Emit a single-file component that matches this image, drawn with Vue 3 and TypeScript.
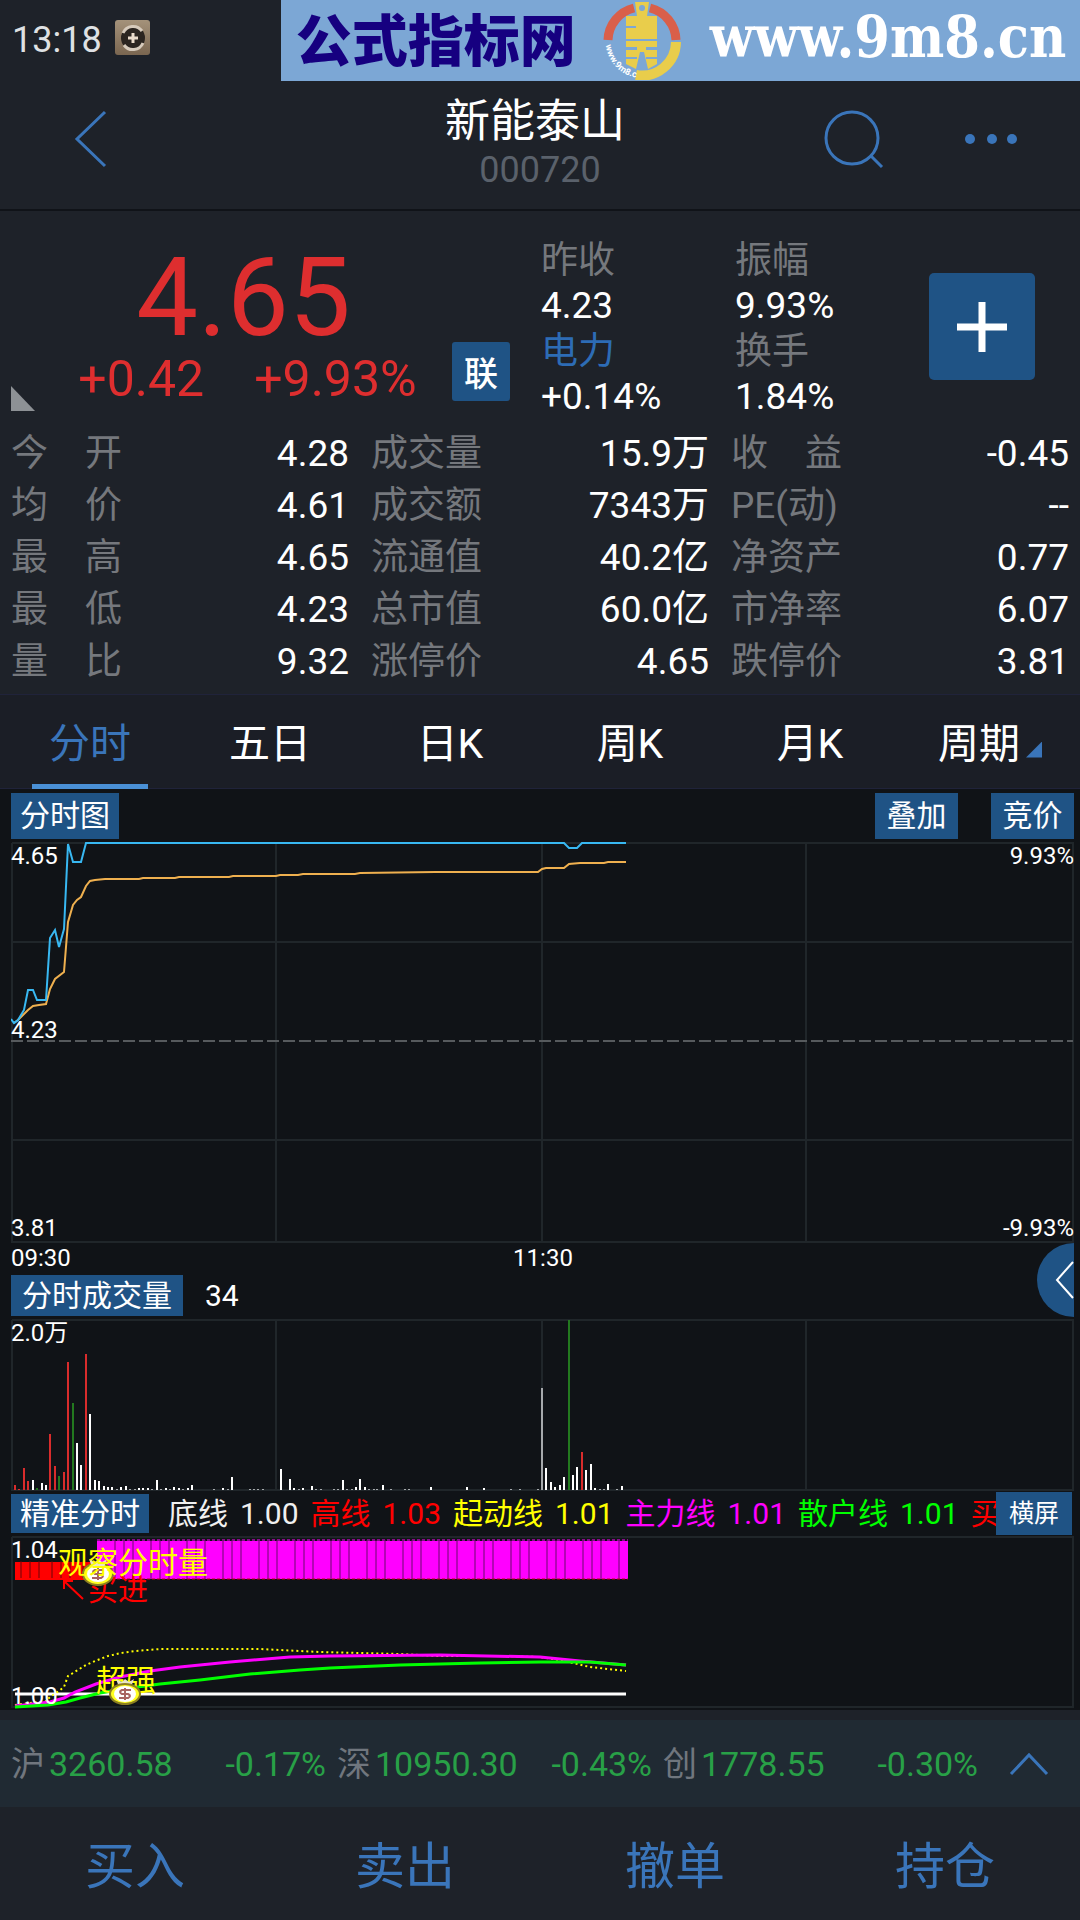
<script setup lang="ts">
import { ref } from 'vue'

type Tone = 'up' | 'down' | 'flat' | 'dim'
interface Bar { x: number; h: number; tone: Tone }

const details: [string, string][][] = [
  [['今　开', '4.28'], ['成交量', '15.9万'], ['收　益', '-0.45']],
  [['均　价', '4.61'], ['成交额', '7343万'], ['PE(动)', '--']],
  [['最　高', '4.65'], ['流通值', '40.2亿'], ['净资产', '0.77']],
  [['最　低', '4.23'], ['总市值', '60.0亿'], ['市净率', '6.07']],
  [['量　比', '9.32'], ['涨停价', '4.65'], ['跌停价', '3.81']],
]

const tabs = ['分时', '五日', '日K', '周K', '月K', '周期']
const activeTab = ref('分时')

const legend = [
  { name: '底线', value: '1.00', color: '#f0f0f0' },
  { name: '高线', value: '1.03', color: '#ff0000' },
  { name: '起动线', value: '1.01', color: '#ffff00' },
  { name: '主力线', value: '1.01', color: '#ff00ff' },
  { name: '散户线', value: '1.01', color: '#00ff00' },
  { name: '买进', value: '', color: '#ff0000' },
]

const indices = [
  { name: '沪', value: '3260.58', change: '-0.17%' },
  { name: '深', value: '10950.30', change: '-0.43%' },
  { name: '创', value: '1778.55', change: '-0.30%' },
]

const actions = ['买入', '卖出', '撤单', '持仓']

const up: [number, number][] = [
  [4, 5], [8, 1], [13, 22], [17, 9], [39, 56], [44, 24], [53, 18], [57, 128], [75, 136], [571, 38],
]
const down: [number, number][] = [[26, 2], [48, 14], [62, 87], [558, 170]]
const flat: [number, number][] = [
  [22, 10], [31, 7], [35, 5], [66, 47], [70, 25], [79, 76], [84, 10], [88, 9], [93, 4], [97, 3],
  [101, 3], [110, 3], [115, 4], [128, 2], [132, 2], [137, 2], [146, 10], [155, 2], [163, 3],
  [168, 2], [177, 2], [181, 5], [212, 2], [221, 13], [270, 21], [279, 11], [283, 2], [292, 2],
  [301, 4], [332, 10], [345, 3], [349, 11], [354, 3], [372, 5], [420, 3], [456, 3], [473, 2],
  [535, 22], [540, 8], [544, 3], [549, 5], [553, 13], [562, 15], [566, 23], [575, 20],
  [580, 26], [584, 2], [597, 6], [611, 4],
]
const dimXs = [
  106, 119, 124, 141, 150, 159, 172, 203, 217, 239, 243, 247, 252, 288, 305, 310, 323, 327, 336,
  341, 358, 363, 366, 380, 394, 398, 500, 509, 527, 589, 593, 606,
]
const make = (list: [number, number][], tone: Tone): Bar[] => list.map(([x, h]) => ({ x, h, tone }))
const volume: Bar[] = [
  ...make(up, 'up'),
  ...make(down, 'down'),
  ...make(flat, 'flat'),
  ...make(dimXs.map((x): [number, number] => [x, 1]), 'dim'),
  { x: 531, h: 102, tone: 'dim' },
]

const redGaps = [10, 19, 28, 41, 50, 59, 72]
const magentaGaps = Array.from({ length: 59 }, (_, i) => 95 + i * 9).filter((x) => x < 615 && x % 4 !== 3)

const priceLine =
  '0,177 3,181 7,178 13,168 17,148 22,148 26,158 35,158 39,96 44,88 48,105 53,87 57,2 62,20 70,20 75,1 553,1 558,6 566,6 571,1 615,1'
const averageLine =
  '3,181 7,178 17,168 22,164 28,163 35,162 39,147 44,137 53,130 57,80 62,63 66,58 70,55 75,44 79,39 84,38 94,37 128,37 132,36 164,36 168,35 218,35 222,34 265,34 269,33 287,33 292,32 344,32 349,31 424,30 527,30 531,27 535,26 553,26 558,22 569,21 593,21 597,20 615,20'
const dottedLine =
  '4,169 17,167 34,166 39,161 48,155 53,151 57,140 62,137 70,132 75,129 84,125 97,120 110,117 124,115 149,113 249,113 289,115 309,116 349,117 389,118 429,120 489,120 529,121 549,124 579,131 615,135'
const majorLine =
  '4,170 39,166 53,162 64,156 85,148 109,141 139,135 169,131 219,126 279,121 319,120 429,119 529,121 569,125 615,129'
const retailLine =
  '4,171 37,169 55,166 69,162 89,157 119,152 149,148 189,144 239,138 289,134 319,132 389,129 469,127 529,126 579,126 615,129'
</script>

<template>
  <main class="app">
    <div class="status">
      <div class="clock">
        <time>13:18</time>
        <svg width="36" height="36" viewBox="0 0 36 36" aria-hidden="true">
          <defs>
            <linearGradient id="tile" x1="0" y1="0" x2="0" y2="1">
              <stop offset="0" stop-color="#a4927a" />
              <stop offset="1" stop-color="#7a6650" />
            </linearGradient>
          </defs>
          <rect width="35" height="35" rx="3" fill="url(#tile)" />
          <circle cx="18" cy="18" r="12" fill="#2b2520" />
          <path d="M8 13a11 11 0 0 1 19-2M28 23a11 11 0 0 1-19 2" fill="none" stroke="#d6cabb" stroke-width="3" />
          <path d="M18 13v10M13 18h10" stroke="#eadccb" stroke-width="3" />
        </svg>
      </div>
      <div class="banner">
        <strong class="site-name">公式指标网</strong>
        <svg class="coin-logo" width="78" height="78" viewBox="0 0 78 78" aria-hidden="true">
          <path d="M5 38A34 34 0 0 1 31 6M47 6A34 34 0 0 1 73 38" fill="none" stroke="#d95f4a" stroke-width="9" />
          <path d="M73 40A34 34 0 0 1 33 73" fill="none" stroke="#e9cd4b" stroke-width="10" />
          <path d="M32 0h14l-2 14h10v23H23V26h10v-2H23V14h11zM23 39h31v6H43v3h11v7H43v2h11v5l-9 5-4-17h-4l-4 17-10-5v-5h11v-2H23v-7h11v-3H23z" fill="#e9cd4b" />
          <circle cx="39" cy="6" r="3" fill="#7ca7d5" />
          <path id="rim" d="M3 43A36 36 0 0 0 31 75" fill="none" />
          <text class="rim-text"><textPath href="#rim">www.9m8.cn</textPath></text>
        </svg>
        <span class="site-url">www.9m8.cn</span>
      </div>
    </div>

    <header class="header">
      <button class="icon-btn back" aria-label="返回">
        <svg width="34" height="58" viewBox="0 0 34 58"><path d="M31 2 3 29l28 27" /></svg>
      </button>
      <div class="title">
        <h1>新能泰山</h1>
        <span>000720</span>
      </div>
      <div class="tools">
        <button class="icon-btn" aria-label="搜索">
          <svg width="60" height="60" viewBox="0 0 60 60"><circle cx="28" cy="29" r="26" /><path d="m47 47 11 11" /></svg>
        </button>
        <button class="icon-btn" aria-label="更多">
          <svg class="dots" width="54" height="12" viewBox="0 0 54 12"><circle cx="6" cy="6" r="5" /><circle cx="28" cy="6" r="5" /><circle cx="48" cy="6" r="5" /></svg>
        </button>
      </div>
    </header>

    <section class="quote">
      <div class="summary">
        <svg class="corner" width="24" height="25" viewBox="0 0 24 25" aria-hidden="true"><path d="M0 0v25h24z" fill="#8d9195" /></svg>
        <div class="headline">
          <div class="price">4.65</div>
          <div class="changes"><span>+0.42</span><span>+9.93%</span></div>
        </div>
        <button class="link-btn">联</button>
        <dl class="stats">
          <div><dt>昨收</dt><dd>4.23</dd><dt><a href="#sector">电力</a></dt><dd>+0.14%</dd></div>
          <div><dt>振幅</dt><dd>9.93%</dd><dt>换手</dt><dd>1.84%</dd></div>
        </dl>
        <button class="add-btn" aria-label="加自选">
          <svg width="50" height="50" viewBox="0 0 50 50"><path d="M25 0v50M0 25h50" /></svg>
        </button>
      </div>
      <table class="details">
        <tbody>
          <tr v-for="(row, i) in details" :key="i">
            <template v-for="[name, value] in row" :key="name">
              <th scope="row">{{ name }}</th>
              <td>{{ value }}</td>
            </template>
          </tr>
        </tbody>
      </table>
    </section>

    <nav class="tabs">
      <button v-for="tab in tabs" :key="tab" :class="{ active: tab === activeTab }" @click="activeTab = tab">
        {{ tab }}<i v-if="tab === '周期'" class="more"></i>
      </button>
    </nav>

    <section class="charts">
      <div class="bar bar-price">
        <button class="chip">分时图</button>
        <span class="spacer"></span>
        <button class="chip">叠加</button>
        <button class="chip chip-last">竞价</button>
      </div>
      <div class="price-chart">
        <svg class="chart" viewBox="0 0 1063 430" role="img" aria-label="分时走势">
          <g class="grid">
            <path d="M1 1H1062V400H1V1M265 1V400M531 1V400M795 1V400M1 100H1062M1 298H1062" />
          </g>
          <path class="dash" d="M0 199H1062" />
          <polyline :points="averageLine" class="line average" />
          <polyline :points="priceLine" class="line price-line" />
          <text x="0" y="22">4.65</text>
          <text x="0" y="196">4.23</text>
          <text x="0" y="394">3.81</text>
          <text x="1063" y="22" text-anchor="end">9.93%</text>
          <text x="1063" y="394" text-anchor="end">-9.93%</text>
          <text x="0" y="424">09:30</text>
          <text x="532" y="424" text-anchor="middle">11:30</text>
        </svg>
        <button class="drawer" aria-label="展开">
          <svg width="37" height="76" viewBox="0 0 37 76"><circle cx="37" cy="38" r="37" fill="#1f5385" /><path d="M36 20 20 38l16 18" fill="none" stroke="#fff" stroke-width="2" /></svg>
        </button>
      </div>

      <div class="bar bar-volume">
        <button class="chip">分时成交量</button>
        <span class="volume-now">34</span>
      </div>
      <svg class="chart" viewBox="0 0 1063 172" role="img" aria-label="成交量">
        <g class="grid"><path d="M1 1H1062V171H1V1M265 1V171M531 1V171M795 1V171" /></g>
        <rect v-for="bar in volume" :key="bar.x" :class="bar.tone" :x="bar.x - 1" :y="171 - bar.h" width="2" :height="bar.h" />
        <text x="0" y="22">2.0万</text>
      </svg>

      <div class="bar bar-signal">
        <button class="chip">精准分时</button>
        <div class="legend">
          <span v-for="item in legend" :key="item.name" :style="{ color: item.color }">
            <b>{{ item.name }}</b><b>{{ item.value }}</b>
          </span>
        </div>
        <button class="chip wide-btn">横屏</button>
      </div>
      <svg class="chart" viewBox="0 0 1063 173" role="img" aria-label="精准分时">
        <g class="grid"><path d="M1 1H1062V171H1V1" /></g>
        <path d="M4 43V26H86V43Z" fill="#ff0000" />
        <path d="M86 43V5H617V43Z" fill="#ff00ff" />
        <path d="M86 4H617" class="teeth" />
        <path v-for="x in redGaps" :key="x" :d="`M${x} 25V42`" stroke="#6b0508" />
        <path v-for="x in magentaGaps" :key="x" :d="`M${x} 4V43`" stroke="#6b0a6c" />
        <path d="M4 43H86" stroke="#ff0000" stroke-width="2" />
        <path d="M86 43H617" class="foot" />
        <path d="M4 158H615" stroke="#fff" stroke-width="3" />
        <polyline :points="dottedLine" class="line dotted" />
        <polyline :points="majorLine" class="line major" />
        <polyline :points="retailLine" class="line retail" />
        <path d="m53 45 19 18M53 53v-8h9" fill="none" stroke="#ff0000" stroke-width="2" />
        <text class="note red" x="77" y="64">买进</text>
        <g transform="translate(87 38)">
          <ellipse rx="15" ry="11" fill="#ffff20" stroke="#8d8020" stroke-width="2" />
          <path d="M-9-15-3-12 0-15 4-12 9-15 6-7H-6z" fill="#e8e4c8" />
          <ellipse rx="11" ry="8" fill="#fff" />
          <path d="M6-4H-3q-4 2 0 4h6q4 2 0 4h-9M0-6V6" fill="none" stroke="#a86462" stroke-width="2" />
        </g>
        <text class="note yellow" x="47" y="37">观察分时量</text>
        <text class="note yellow" x="85" y="155">超强</text>
        <g transform="translate(114 158)">
          <path d="M-9-15-3-12 0-15 4-12 9-15 6-7H-6z" fill="#e8e4c8" />
          <ellipse rx="15" ry="10" fill="#ffff20" stroke="#8d8020" stroke-width="2" />
          <ellipse rx="11" ry="8" fill="#fff" />
          <path d="M6-4H-3q-4 2 0 4h6q4 2 0 4h-9M0-6V6" fill="none" stroke="#a86462" stroke-width="2" />
        </g>
        <text x="0" y="22">1.04</text>
        <text x="0" y="168">1.00</text>
      </svg>
    </section>

    <section class="indices">
      <div v-for="item in indices" :key="item.name" class="index">
        <span class="index-name">{{ item.name }}</span>
        <span>{{ item.value }}</span>
        <span class="index-change">{{ item.change }}</span>
      </div>
      <button class="icon-btn" aria-label="展开指数">
        <svg width="40" height="24" viewBox="0 0 40 24"><path d="M2 22 20 3l18 19" /></svg>
      </button>
    </section>

    <footer class="actions">
      <button v-for="action in actions" :key="action">{{ action }}</button>
    </footer>
  </main>
</template>

<style>
body {
  margin: 0;
  background: #1e2229;
}
</style>

<style scoped>
.app {
  min-height: 100vh;
  display: flex;
  flex-direction: column;
  background: #1e2229;
  color: #fff;
  font-family: Roboto, "Noto Sans CJK SC", sans-serif;
  font-size: 37px;
  overflow: hidden;
}
button {
  margin: 0;
  padding: 0;
  border: 0;
  background: none;
  color: inherit;
  font: inherit;
  cursor: pointer;
}
svg {
  display: block;
}
.status {
  display: flex;
  height: 81px;
}
.clock {
  flex: 1;
  display: flex;
  align-items: center;
  gap: 13px;
  padding: 0 0 2px 12px;
  color: #dfe1e3;
  font-size: 36px;
  line-height: 40px;
}
.clock svg {
  margin-bottom: 4px;
}
.banner {
  width: 74%;
  display: flex;
  align-items: center;
  background: #7ca7d5;
  box-sizing: border-box;
  padding-left: 15px;
  white-space: nowrap;
}
.site-name {
  padding-bottom: 8px;
  color: #160080;
  font-family: "Noto Sans CJK SC", sans-serif;
  font-size: 56px;
  font-weight: 900;
  line-height: 72px;
}
.coin-logo {
  flex: none;
  margin-left: 27px;
}
.rim-text {
  fill: #fff;
  font-size: 9px;
  font-weight: 700;
}
.site-url {
  margin-left: 29px;
  padding-bottom: 8px;
  font-family: "DejaVu Serif Condensed", "DejaVu Serif", serif;
  font-size: 57px;
  font-weight: 700;
  line-height: 72px;
}
.header {
  display: grid;
  grid-template-columns: 1fr auto 1fr;
  align-items: center;
  height: 128px;
  border-bottom: 2px solid #101318;
}
.icon-btn {
  display: flex;
  align-items: center;
  justify-content: center;
}
.icon-btn path,
.icon-btn circle {
  fill: none;
  stroke: #3a75ba;
  stroke-width: 3;
}
.icon-btn .dots circle {
  fill: #3a75ba;
  stroke: none;
}
.back {
  justify-self: start;
  margin-left: 74px;
  padding-bottom: 12px;
}
.title {
  display: flex;
  flex-direction: column;
  align-items: center;
  padding-bottom: 2px;
}
.title h1 {
  margin: 0;
  padding-right: 10px;
  font-size: 45px;
  font-weight: 400;
  line-height: 52px;
}
.title span {
  color: #5a616b;
  font-size: 36px;
  line-height: 44px;
}
.tools {
  justify-self: end;
  display: flex;
  gap: 80px;
  padding: 0 62px 12px 0;
}
.summary {
  display: flex;
  align-items: flex-end;
  height: 217px;
  padding: 0 45px 0 11px;
}
.corner {
  margin-bottom: 17px;
}
.headline {
  flex: 1;
  display: flex;
  flex-direction: column;
  align-items: center;
  padding-bottom: 24px;
  color: #de2e2f;
}
.price {
  font-size: 110px;
  line-height: 112px;
}
.changes {
  display: flex;
  gap: 50px;
  padding-left: 8px;
  font-size: 50px;
  line-height: 50px;
}
.link-btn {
  width: 58px;
  height: 59px;
  margin: 0 31px 27px 0;
  border-radius: 3px;
  background: #1f5385;
  font-size: 34px;
  font-weight: 500;
}
.stats {
  display: flex;
  margin: 0;
  padding-bottom: 8px;
}
.stats > div {
  width: 194px;
}
.stats dt {
  color: #75787d;
  line-height: 45px;
}
.stats dd {
  margin: 0;
  line-height: 46px;
}
.stats a {
  color: #2d6cb5;
  text-decoration: none;
}
.add-btn {
  display: flex;
  align-items: center;
  justify-content: center;
  width: 106px;
  height: 107px;
  margin-bottom: 48px;
  border-radius: 5px;
  background: #1f5385;
}
.add-btn path {
  stroke: #fff;
  stroke-width: 7;
}
.details {
  width: 100%;
  table-layout: fixed;
  border-collapse: collapse;
  margin-bottom: 6px;
}
.details th,
.details td {
  padding: 0 11px;
  line-height: 52px;
  font-weight: 400;
  white-space: nowrap;
}
.details th {
  color: #75787d;
  text-align: left;
}
.details td {
  text-align: right;
}
.tabs {
  display: grid;
  grid-template-columns: repeat(6, 1fr);
  height: 93px;
  border-top: 1px solid #20233a;
  border-bottom: 1px solid #20233a;
  background: #1b1e26;
}
.tabs button {
  position: relative;
  padding-bottom: 4px;
  font-size: 41px;
}
.tabs .active {
  color: #3a75ba;
}
.tabs .active::after {
  content: "";
  position: absolute;
  left: 18%;
  right: 18%;
  bottom: -1px;
  height: 5px;
  background: #4a90d6;
}
.more {
  display: inline-block;
  width: 16px;
  height: 16px;
  margin-left: 6px;
  background: #3a75ba;
  clip-path: polygon(100% 0, 100% 100%, 0 100%);
}
.charts {
  padding: 0 6px 1px 11px;
  background: #101317;
}
.bar {
  display: flex;
  align-items: center;
  font-size: 30px;
  line-height: 40px;
}
.chip {
  flex: none;
  height: 46px;
  padding: 0 9px;
  background: #1f5385;
  white-space: nowrap;
}
.bar-price {
  height: 53px;
}
.bar-price .chip {
  min-width: 83px;
}
.spacer {
  flex: 1;
}
.chip-last {
  margin-left: 33px;
}
.chart {
  width: 100%;
  height: auto;
}
.chart text {
  fill: #fff;
  font-size: 24px;
}
.grid path {
  fill: none;
  stroke: #20262a;
  stroke-width: 2;
  shape-rendering: crispEdges;
}
.dash {
  stroke: #565a5d;
  stroke-width: 2;
  stroke-dasharray: 12 4;
}
.line {
  fill: none;
  stroke-width: 2;
}
.price-line {
  stroke: #38b8f2;
}
.average {
  stroke: #efb04f;
}
.price-chart {
  position: relative;
}
.drawer {
  position: absolute;
  right: 0;
  bottom: -46px;
}
.bar-volume {
  height: 47px;
}
.bar-volume .chip {
  height: 41px;
  padding: 0 11px;
}
.volume-now {
  margin-left: 22px;
}
.up {
  fill: #d92c2c;
}
.down {
  fill: #23791f;
}
.flat {
  fill: #fff;
}
.dim {
  fill: #a6a9ac;
}
.bar-signal {
  height: 45px;
}
.bar-signal .chip {
  height: 39px;
}
.bar-signal .wide-btn {
  height: 43px;
  margin-right: 2px;
  padding: 0 13px;
  font-size: 25px;
}
.legend {
  flex: 1;
  min-width: 0;
  display: flex;
  gap: 12px;
  margin-left: 19px;
  overflow: hidden;
  white-space: nowrap;
}
.legend span {
  display: flex;
  flex: none;
  gap: 12px;
}
.legend b {
  font-weight: 400;
}
.teeth {
  stroke: #ff00ff;
  stroke-width: 1;
  stroke-dasharray: 3 2;
}
.foot {
  stroke: #c00018;
  stroke-width: 1;
  stroke-dasharray: 3 2;
}
.dotted {
  stroke: #ffff00;
  stroke-dasharray: 2 3;
}
.major {
  stroke: #ff00ff;
  stroke-width: 3;
}
.retail {
  stroke: #00ff00;
  stroke-width: 3;
}
.chart .note {
  font-size: 30px;
}
.chart .red {
  fill: #ff0000;
}
.chart .yellow {
  fill: #ffff00;
}
.indices {
  display: grid;
  grid-template-columns: 1fr 1fr 1fr 102px;
  margin-top: 10px;
  height: 87px;
  align-items: center;
  background: #202a33;
  font-size: 34px;
  line-height: 40px;
}
.index {
  display: flex;
  gap: 4px;
  padding-left: 11px;
  color: #28a047;
}
.index-name {
  color: #70767e;
}
.index-change {
  margin-left: auto;
}
.actions {
  display: grid;
  grid-template-columns: repeat(4, 1fr);
  height: 113px;
  color: #3a75ba;
  font-size: 50px;
}
.actions button {
  padding-bottom: 4px;
}
</style>
